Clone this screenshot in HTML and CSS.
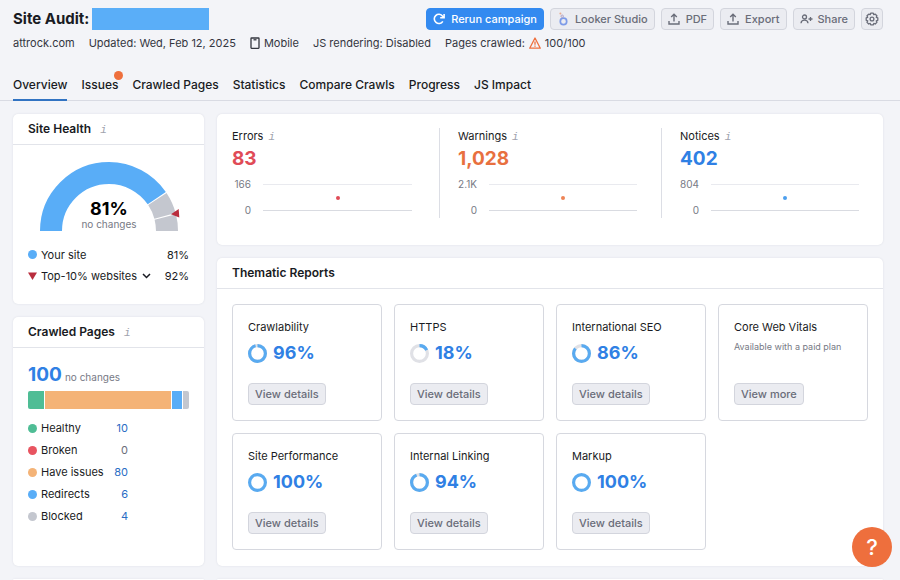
FILE: index.html
```html
<!DOCTYPE html>
<html lang="en">
<head>
  <meta charset="UTF-8" />
  <meta name="viewport" content="width=device-width, initial-scale=1.0"/>
  <title>Site Audit: attrock.com</title>
  <link rel="stylesheet" href="styles.css">
</head>
<body>
  <header>
    <div class="title-row">
      <h1>Site Audit:</h1>
      <span class="project-name"></span>
      <div class="actions">
        <button class="btn primary" type="button">
          <svg width="12" height="12" viewBox="0 0 12 12" fill="none" stroke="currentColor" stroke-width="1.6"><path d="M9.8 8.3A4.6 4.6 0 1 1 9.6 3.2L11 4.6M11.1 1v3.8H7.2"/></svg>
          Rerun campaign
        </button>
        <button class="btn" type="button">
          <svg width="12" height="14" viewBox="0 0 12 14" fill="none"><circle cx="6.5" cy="9.4" r="3.2" stroke="#7d9be8" stroke-width="1.7"/><circle cx="5.2" cy="4.2" r="1.2" stroke="#b3a3c4"/><circle cx="3.4" cy="1.6" r="1" fill="#eaa98c"/></svg>
          Looker Studio
        </button>
        <button class="btn" type="button">
          <svg width="12" height="12" viewBox="0 0 12 12" fill="none" stroke="currentColor" stroke-width="1.4"><path d="M6 8.5V1.5M3.2 4.1L6 1.3l2.8 2.8M1 8v3h10V8"/></svg>
          PDF
        </button>
        <button class="btn" type="button">
          <svg width="12" height="12" viewBox="0 0 12 12" fill="none" stroke="currentColor" stroke-width="1.4"><path d="M6 8.5V1.5M3.2 4.1L6 1.3l2.8 2.8M1 8v3h10V8"/></svg>
          Export
        </button>
        <button class="btn share" type="button">
          <svg width="13" height="12" viewBox="0 0 13 12" fill="none" stroke="currentColor" stroke-width="1.3"><circle cx="4.5" cy="4" r="2"/><path d="M1 10.2c.2-2 1.5-3 3.5-3s3.3 1 3.5 3M10.500 4v4M8.500 6h4"/></svg>
          Share
        </button>
        <button class="btn icon-only" type="button" aria-label="Settings">
          <svg width="14" height="14" viewBox="0 0 14 14" fill="none" stroke="currentColor" stroke-width="1.3" stroke-linejoin="round"><path d="M5.7 1.2h2.6l.5 1.5 1.5-.5 1.6 1.6-.6 1.5 1.500.5v2.5l-1.500.6.6 1.5-1.700 1.6-1.400-.6-.6 1.5H5.700l-.5-1.500-1.500.6L2 10.400l.7-1.500-1.500-.6V5.800l1.500-.5L2 3.800l1.700-1.600 1.500.5z"/><circle cx="7" cy="7" r="1.9"/></svg>
        </button>
      </div>
    </div>

    <div class="meta">
      <span>attrock.com</span>
      <span>Updated: Wed, Feb 12, 2025</span>
      <span class="device">
        <svg width="10" height="12" viewBox="0 0 10 12" fill="none" stroke="currentColor" stroke-width="1.3"><rect x="1" y="1" width="8" height="10.3" rx=".5"/><path d="M3.5 2.8h3"/></svg>
        Mobile
      </span>
      <span>JS rendering: Disabled</span>
      <span class="crawled">
        Pages crawled:
        <svg width="12" height="12" viewBox="0 0 12 12" fill="none" stroke="#ee6f3d" stroke-width="1.3" stroke-linejoin="round"><path d="M6 1L11.3 11.2H.7zM6 4.5v3.3M6 8.6v1.2"/></svg>
        100/100
      </span>
    </div>

    <nav>
      <a class="active" href="#overview">Overview</a>
      <a class="has-badge" href="#issues">Issues</a>
      <a href="#pages">Crawled Pages</a>
      <a href="#statistics">Statistics</a>
      <a href="#compare">Compare Crawls</a>
      <a href="#progress">Progress</a>
      <a href="#js-impact">JS Impact</a>
    </nav>
  </header>

  <main>
    <aside class="column">
      <section class="card health">
        <h2>Site Health <span class="info">i</span></h2>
        <div class="card-body">
          <svg class="gauge" width="142" height="70" viewBox="0 0 142 70" fill="none">
            <g stroke-width="22">
              <path d="M11 69A58 58 0 0 1 127 69" stroke="#c4c7cf" pathLength="100" stroke-dasharray="0 81.4 10.2 .6 7.8 10"/>
              <path d="M11 69A58 58 0 0 1 127 69" stroke="#59adf7" pathLength="100" stroke-dasharray="80.8 100"/>
            </g>
            <path d="M131 52.3L138.7 47l.6 8.5z" fill="#b92d3d"/>
            <text class="gauge-value" x="69" y="53">81%</text>
            <text class="gauge-note" x="69" y="66">no changes</text>
          </svg>
          <div class="legend-row">
            <span class="dot blue"></span>
            <span>Your site</span>
            <span class="value">81%</span>
          </div>
          <div class="legend-row">
            <svg width="9" height="8" viewBox="0 0 9 8"><path d="M0 .5h9L4.5 8z" fill="#b92d3d"/></svg>
            <select aria-label="Compare with">
              <option>Top-10% websites</option>
            </select>
            <svg width="9" height="6" viewBox="0 0 9 6" fill="none" stroke="#191b23" stroke-width="1.5"><path d="M1 1l3.5 3.5L8 1"/></svg>
            <span class="value">92%</span>
          </div>
        </div>
      </section>

      <section class="card pages">
        <h2>Crawled Pages <span class="info">i</span></h2>
        <div class="card-body">
          <p class="total"><a class="number" href="#pages">100</a> <small>no changes</small></p>
          <div class="bar">
            <span class="green" style="flex-grow: 10"></span>
            <span class="orange" style="flex-grow: 80"></span>
            <span class="blue" style="flex-grow: 6"></span>
            <span class="gray" style="flex-grow: 4"></span>
          </div>
          <table>
            <tr><th><span class="dot green"></span>Healthy</th><td><a href="#healthy">10</a></td></tr>
            <tr><th><span class="dot red"></span>Broken</th><td>0</td></tr>
            <tr><th><span class="dot orange"></span>Have issues</th><td><a href="#have-issues">80</a></td></tr>
            <tr><th><span class="dot blue"></span>Redirects</th><td><a href="#redirects">6</a></td></tr>
            <tr><th><span class="dot gray"></span>Blocked</th><td><a href="#blocked">4</a></td></tr>
          </table>
        </div>
      </section>

      <section class="card next"></section>
    </aside>

    <div class="column">
      <section class="card issues">
        <div class="issue errors">
          <h3>Errors <span class="info">i</span></h3>
          <a class="number" href="#errors">83</a>
          <div class="chart">
            <div class="axis"><span>166</span><span>0</span></div>
            <div class="plot"><span class="point"></span></div>
          </div>
        </div>
        <div class="issue warnings">
          <h3>Warnings <span class="info">i</span></h3>
          <a class="number" href="#warnings">1,028</a>
          <div class="chart">
            <div class="axis"><span>2.1K</span><span>0</span></div>
            <div class="plot"><span class="point"></span></div>
          </div>
        </div>
        <div class="issue notices">
          <h3>Notices <span class="info">i</span></h3>
          <a class="number" href="#notices">402</a>
          <div class="chart">
            <div class="axis"><span>804</span><span>0</span></div>
            <div class="plot"><span class="point"></span></div>
          </div>
        </div>
      </section>

      <section class="card thematic">
        <h2>Thematic Reports</h2>
        <div class="reports">
          <article class="report">
            <h3>Crawlability</h3>
            <div class="score">
              <svg class="ring" viewBox="0 0 18 18"><circle cx="9" cy="9" r="7.5"/><circle class="fill" cx="9" cy="9" r="7.5" pathLength="100" stroke-dasharray="96 100"/></svg>
              <span class="number">96%</span>
            </div>
            <button class="btn" type="button">View details</button>
          </article>
          <article class="report">
            <h3>HTTPS</h3>
            <div class="score">
              <svg class="ring" viewBox="0 0 18 18"><circle cx="9" cy="9" r="7.5"/><circle class="fill" cx="9" cy="9" r="7.5" pathLength="100" stroke-dasharray="18 100"/></svg>
              <span class="number">18%</span>
            </div>
            <button class="btn" type="button">View details</button>
          </article>
          <article class="report">
            <h3>International SEO</h3>
            <div class="score">
              <svg class="ring" viewBox="0 0 18 18"><circle cx="9" cy="9" r="7.5"/><circle class="fill" cx="9" cy="9" r="7.5" pathLength="100" stroke-dasharray="86 100"/></svg>
              <span class="number">86%</span>
            </div>
            <button class="btn" type="button">View details</button>
          </article>
          <article class="report">
            <h3>Core Web Vitals</h3>
            <p class="paid">Available with a paid plan</p>
            <button class="btn" type="button">View more</button>
          </article>
          <article class="report">
            <h3>Site Performance</h3>
            <div class="score">
              <svg class="ring" viewBox="0 0 18 18"><circle class="fill" cx="9" cy="9" r="7.5"/></svg>
              <span class="number">100%</span>
            </div>
            <button class="btn" type="button">View details</button>
          </article>
          <article class="report">
            <h3>Internal Linking</h3>
            <div class="score">
              <svg class="ring" viewBox="0 0 18 18"><circle cx="9" cy="9" r="7.5"/><circle class="fill" cx="9" cy="9" r="7.5" pathLength="100" stroke-dasharray="94 100"/></svg>
              <span class="number">94%</span>
            </div>
            <button class="btn" type="button">View details</button>
          </article>
          <article class="report">
            <h3>Markup</h3>
            <div class="score">
              <svg class="ring" viewBox="0 0 18 18"><circle class="fill" cx="9" cy="9" r="7.5"/></svg>
              <span class="number">100%</span>
            </div>
            <button class="btn" type="button">View details</button>
          </article>
        </div>
      </section>

      <section class="card next"></section>
    </div>
  </main>

  <button class="help" type="button" aria-label="Help">?</button>
</body>
</html>
```
FILE: styles.css
```css
* { box-sizing: border-box; }

body {
  margin: 0;
  min-height: 100vh;
  display: flex;
  flex-direction: column;
  background: #f3f4f8;
  color: #191b23;
  font-family: Inter, "Liberation Sans", sans-serif;
  font-size: 11px;
  line-height: 16px;
}

h1, h2, h3, p { margin: 0; }

a {
  color: #2a6cc4;
  text-decoration: none;
}

svg { flex-shrink: 0; }

/* header */

header { border-bottom: 1px solid #d9dbe3; }

.title-row {
  display: flex;
  align-items: center;
  padding: 8px 17px 0 13px;
}

h1 {
  font-size: 15px;
  line-height: 22px;
  font-weight: 700;
}

.project-name {
  width: 117px;
  height: 22px;
  margin-left: 3px;
  background: #5aaef8;
}

.actions {
  display: flex;
  gap: 6px;
  margin-left: auto;
}

.btn {
  display: flex;
  align-items: center;
  gap: 6px;
  height: 22px;
  padding: 0 6px;
  border: 1px solid #d3d5dd;
  border-radius: 4px;
  background: #ebecf1;
  color: #6a6d79;
  font-family: inherit;
  font-size: 11px;
  font-weight: 500;
  white-space: nowrap;
}

.btn.primary {
  border-color: #338af0;
  background: #338af0;
  color: #fff;
}

.btn.share { gap: 5px; }

.btn.icon-only { padding: 0 3px; }

.meta {
  display: flex;
  gap: 14px;
  padding: 5px 13px 0;
  color: #34363f;
}

.device, .crawled {
  display: flex;
  align-items: center;
  gap: 4px;
}

nav {
  display: flex;
  gap: 14px;
  padding: 22px 13px 0;
}

nav a {
  position: relative;
  padding: 4px 0 6px;
  margin-bottom: -1px;
  border-bottom: 2px solid transparent;
  color: #191b23;
  font-size: 12px;
  line-height: 16px;
  font-weight: 500;
}

nav a.active { border-color: #3173c2; }

.has-badge::after {
  content: "";
  position: absolute;
  top: -2px;
  right: -5px;
  width: 9px;
  height: 9px;
  border-radius: 50%;
  background: #ee6f3d;
}

/* layout */

main {
  flex: 1;
  display: grid;
  grid-template-columns: 191px 1fr;
  gap: 13px;
  padding: 13px 17px 0 13px;
}

.column {
  display: flex;
  flex-direction: column;
  gap: 13px;
}

.card {
  border-radius: 5px;
  background: #fff;
  box-shadow: 0 0 2px #d8dae2;
}

.card.next {
  flex: 1;
  border-radius: 5px 5px 0 0;
}

h2 {
  padding: 7px 15px;
  border-bottom: 1px solid #e2e4ea;
  font-size: 12px;
  line-height: 16px;
  font-weight: 600;
}

h3 {
  font-size: 11px;
  font-weight: 400;
}

.info {
  margin-left: 2px;
  color: #a0a3ae;
  font-family: "Liberation Mono", monospace;
  font-size: 11px;
  font-style: italic;
  font-weight: 400;
  line-height: 12px;
}

h2 .info { margin-left: 6px; }

.card-body { padding: 17px 15px; }

.number {
  color: #2f80e4;
  font-size: 19px;
  line-height: 24px;
  font-weight: 700;
}

.dot {
  display: inline-block;
  width: 9px;
  height: 9px;
  border-radius: 50%;
}

.green { background: #4fbd95; }
.red { background: #e85460; }
.orange { background: #f4b377; }
.blue { background: #59adf7; }
.gray { background: #c4c7cf; }

/* site health */

.health { height: 190px; }

.gauge {
  display: block;
  margin: 0 0 12px 12px;
}

.gauge-value {
  fill: #000;
  font-size: 18px;
  font-weight: 700;
  text-anchor: middle;
}

.gauge-note {
  fill: #777a85;
  font-size: 10px;
  text-anchor: middle;
}

.legend-row {
  display: flex;
  align-items: center;
  gap: 4px;
  height: 21px;
}

.value { margin-left: auto; }

select {
  appearance: none;
  padding: 0;
  border: 0;
  background: none;
  color: inherit;
  font: inherit;
}

/* crawled pages */

.pages { height: 249px; }

.pages .card-body { padding-top: 15px; }

.total small {
  color: #777a85;
  font-size: 10px;
}

.bar {
  display: flex;
  gap: 1px;
  height: 18px;
  margin: 4px 0 8px;
  border-radius: 2px;
  overflow: hidden;
}

table {
  width: 100px;
  border-collapse: collapse;
}

th, td {
  height: 22px;
  padding: 0;
  font-weight: 400;
  white-space: nowrap;
}

th { text-align: left; }

th .dot {
  margin-right: 4px;
  vertical-align: -1px;
}

td {
  color: #6a6d79;
  text-align: right;
}

/* errors, warnings, notices */

.issues {
  display: grid;
  grid-template-columns: repeat(3, 1fr);
  height: 131px;
  padding: 14px 0 28px;
}

.issue { padding: 0 27px 0 15px; }

.issue + .issue {
  padding: 0 24px 0 18px;
  border-left: 1px solid #dcdee5;
}

.issue .number {
  display: block;
  margin-top: 3px;
}

.errors .number { color: #e04b57; }
.warnings .number { color: #e8703f; }

.chart {
  display: flex;
  gap: 12px;
  margin-top: 5px;
}

.axis {
  display: flex;
  flex-direction: column;
  gap: 10px;
  min-width: 19px;
  color: #777a85;
  font-size: 10px;
  line-height: 16px;
  text-align: right;
}

.plot {
  flex: 1;
  display: grid;
  place-items: center;
  height: 27px;
  margin-top: 8px;
  border-top: 1px solid #e9eaef;
  border-bottom: 1px solid #d9dbe1;
}

.point {
  width: 4px;
  height: 4px;
  border-radius: 50%;
  background: #4c9fee;
}

.errors .point { background: #e04b57; }
.warnings .point { background: #ee8455; }

/* thematic reports */

.reports {
  display: grid;
  grid-template-columns: repeat(4, 1fr);
  gap: 12px;
  padding: 15px 15px 16px;
}

.report {
  display: flex;
  flex-direction: column;
  align-items: flex-start;
  height: 117px;
  padding: 14px 15px 15px;
  border: 1px solid #d6d8df;
  border-radius: 4px;
}

.report .btn { margin-top: auto; }

.score {
  display: flex;
  align-items: center;
  gap: 6px;
  margin-top: 6px;
}

.score .number { font-size: 18px; }

.ring {
  width: 19px;
  height: 19px;
  fill: none;
  stroke: #e0e1e6;
  stroke-width: 3;
  transform: rotate(-90deg);
}

.ring .fill { stroke: #59aaf0; }

.paid {
  margin-top: 4px;
  color: #777a85;
  font-size: 9px;
  white-space: nowrap;
}

.help {
  position: fixed;
  right: 8px;
  bottom: 13px;
  width: 40px;
  height: 40px;
  padding: 0;
  border: 0;
  border-radius: 50%;
  background: #ee6f3d;
  color: #fff;
  font-family: inherit;
  font-size: 22px;
  font-weight: 500;
}
```
